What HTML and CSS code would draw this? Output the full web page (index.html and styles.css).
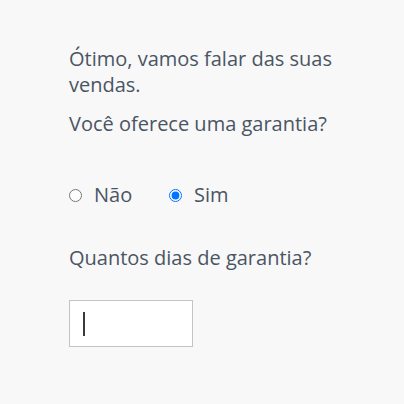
FILE: index.html
```html
<!DOCTYPE html>
<html lang="pt">
<head>
<meta charset="utf-8">
<link rel="stylesheet" href="styles.css">
</head>
<body>
<main class="chat">
  <p class="msg">Ótimo, vamos falar das suas vendas.</p>
  <p class="msg q">Você oferece uma garantia?</p>
  <div class="options">
    <label class="opt"><input type="radio" name="g" value="nao">Não</label>
    <label class="opt"><input type="radio" name="g" value="sim" checked>Sim</label>
  </div>
  <p class="msg q2">Quantos dias de garantia?</p>
  <div class="field"><span class="caret"></span></div>
</main>
</body>
</html>
```
FILE: styles.css
```css
html, body {
  margin: 0;
  background: #f8f8f8;
}
.chat {
  padding: 46px 40px 0 69px;
  font-family: "Open Sans", "Noto Sans", sans-serif;
  font-size: 20px;
  color: #4a5563;
}
.msg {
  margin: 0;
  line-height: 26px;
  width: 290px;
}
.q {
  margin-top: 13px;
}
.options {
  display: grid;
  grid-template-columns: 100px auto;
  margin-top: 45px;
  line-height: 26px;
}
.opt {
  display: block;
}
.opt input {
  margin: 0 12px 5px 0;
  width: 13px;
  height: 13px;
  vertical-align: baseline;
}
.q2 {
  margin-top: 37px;
}
.field {
  margin-top: 29px;
  width: 124px;
  height: 47px;
  border: 1px solid #c4c4c4;
  background: #fff;
  display: flex;
  align-items: center;
  padding-left: 13px;
  box-sizing: border-box;
}
.caret {
  width: 2px;
  height: 24px;
  background: #3a3a3a;
}
```
